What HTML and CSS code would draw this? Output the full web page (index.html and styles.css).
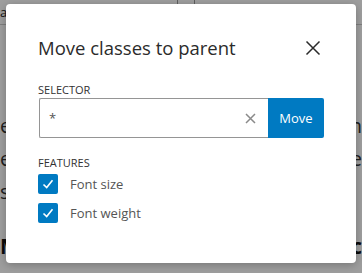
FILE: index.html
```html
<!DOCTYPE html>
<html lang="en">
<head>
    <meta charset="UTF-8">
    <meta name="viewport" content="width=device-width, initial-scale=1.0">
    <title>Move classes to parent</title>
    <link rel="stylesheet" href="styles.css">
</head>
<body>
    <div class="page">
        <div class="topbar">
            <span class="topbar-text">a</span>
            <span class="topbar-box">d</span>
            <span class="topbar-sep"></span>
        </div>
        <div class="page-line line-1"><span>e</span><span>n</span></div>
        <div class="page-line"><span>e</span><span>e</span></div>
        <div class="page-line"><span>s</span><span></span></div>
        <div class="page-line line-bold"><span>M</span><span>c</span></div>
    </div>

    <div class="overlay">
        <div class="dialog">
            <div class="dialog-header">
                <h2>Move classes to parent</h2>
                <button class="close-btn" aria-label="Close">
                    <svg width="16" height="16" viewBox="0 0 16 16">
                        <path d="M1.5 1.5 L14.5 14.5 M14.5 1.5 L1.5 14.5" stroke="#2b2b2b" stroke-width="1.5" fill="none"/>
                    </svg>
                </button>
            </div>

            <label class="field-label selector-label" for="selector">Selector</label>
            <div class="input-row">
                <div class="input-wrap">
                    <input type="text" id="selector" value="*">
                    <span class="clear-btn">
                        <svg width="11" height="11" viewBox="0 0 11 11">
                            <path d="M1 1 L10 10 M10 1 L1 10" stroke="#8a8a8a" stroke-width="1.5" fill="none"/>
                        </svg>
                    </span>
                </div>
                <button class="move-btn">Move</button>
            </div>

            <div class="field-label features-label">Features</div>
            <label class="check-row">
                <span class="checkbox">
                    <svg width="20" height="20" viewBox="0 0 20 20">
                        <path d="M5.5 10.5 L8.7 13.6 L14.5 6.3" stroke="#fff" stroke-width="1.6" fill="none"/>
                    </svg>
                </span>
                Font size
            </label>
            <label class="check-row">
                <span class="checkbox">
                    <svg width="20" height="20" viewBox="0 0 20 20">
                        <path d="M5.5 10.5 L8.7 13.6 L14.5 6.3" stroke="#fff" stroke-width="1.6" fill="none"/>
                    </svg>
                </span>
                Font weight
            </label>
        </div>
    </div>
</body>
</html>
```

FILE: styles.css
```css
body {
    margin: 0;
    font-family: "Open Sans", "Noto Sans", sans-serif;
    background: #fff;
    color: #333;
    width: 362px;
    height: 273px;
    overflow: hidden;
    position: relative;
}

/* page behind the dialog */
.page {
    height: 273px;
}

.topbar {
    display: flex;
    align-items: center;
    height: 24px;
    border-bottom: 1px solid #ccc;
    font-size: 13px;
    color: #222;
}

.topbar-text {
    width: 26px;
}

.topbar-box {
    padding: 0 4px;
    border: 1px solid #999;
    line-height: 12px;
}

.topbar-sep {
    width: 16px;
    height: 24px;
    margin-left: 133px;
    border-left: 1px solid #999;
    border-right: 1px solid #999;
}

.page-line {
    display: flex;
    justify-content: space-between;
    font-size: 20px;
    line-height: 33px;
    color: #333;
}

.line-1 {
    margin-top: 84px;
}

.line-bold {
    margin-top: 22px;
    font-size: 21px;
    font-weight: bold;
    color: #111;
}

/* modal */
.overlay {
    position: absolute;
    top: 0;
    left: 0;
    right: 0;
    bottom: 0;
    background: rgba(0, 0, 0, 0.38);
    padding: 4px 6px;
}

.dialog {
    background: #fff;
    border-radius: 4px;
    box-shadow: 0 2px 8px rgba(0, 0, 0, 0.25);
    height: 259px;
    box-sizing: border-box;
    padding: 29px 32px 0 32px;
}

.dialog-header {
    display: flex;
    justify-content: space-between;
    align-items: center;
    margin-bottom: 20px;
}

.dialog-header h2 {
    margin: 0;
    font-size: 18.5px;
    font-weight: normal;
    color: #2b2b2b;
    line-height: 30px;
}

.close-btn {
    border: none;
    background: none;
    padding: 0;
    margin-right: 3px;
    width: 16px;
    height: 16px;
    cursor: pointer;
}

.field-label {
    display: block;
    font-size: 11px;
    text-transform: uppercase;
    color: #323232;
    line-height: 14px;
}

.selector-label {
    margin-bottom: 1px;
}

.input-row {
    display: flex;
    height: 40px;
}

.input-wrap {
    flex: 1;
    display: flex;
    align-items: center;
    border: 1px solid #959595;
    border-right: none;
    border-radius: 2px 0 0 2px;
    margin-left: 1px;
}

.input-wrap input {
    flex: 1;
    min-width: 0;
    border: none;
    outline: none;
    font-family: inherit;
    font-size: 13px;
    color: #555;
    padding: 0 9px;
    height: 36px;
}

.clear-btn {
    display: flex;
    margin-right: 12px;
}

.move-btn {
    width: 56px;
    border: none;
    border-radius: 0 2px 2px 0;
    background: #007ac2;
    color: #fff;
    font-family: inherit;
    font-size: 13px;
    cursor: pointer;
    padding: 0;
}

.features-label {
    margin-top: 18px;
    margin-bottom: 4px;
}

.check-row {
    display: flex;
    align-items: center;
    gap: 12px;
    font-size: 13px;
    color: #555;
    height: 20px;
    margin-bottom: 9px;
}

.checkbox {
    width: 20px;
    height: 20px;
    border-radius: 2px;
    background: #007ac2;
    display: flex;
}
```
